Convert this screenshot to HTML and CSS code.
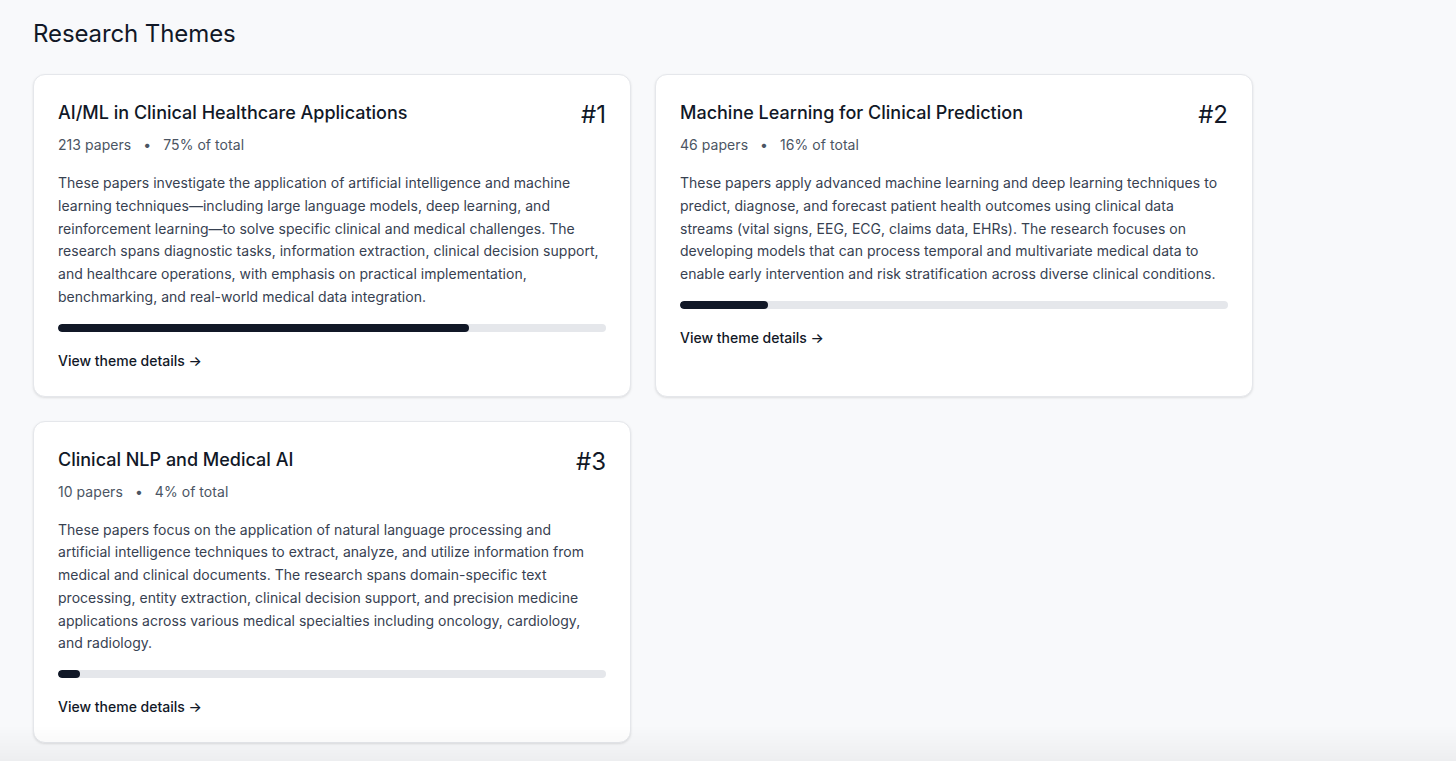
FILE: index.html
```html
<!DOCTYPE html>
<html lang="en">
<head>
<meta charset="utf-8">
<title>Research Themes</title>
<link rel="stylesheet" href="styles.css">
</head>
<body>
<main class="page">
  <h1 class="page-title">Research Themes</h1>
  <div class="grid">
    <article class="card">
      <div class="card-head">
        <h2 class="card-title">AI/ML in Clinical Healthcare Applications</h2>
        <span class="rank">#1</span>
      </div>
      <div class="meta"><span>213 papers</span><span class="dot">•</span><span>75% of total</span></div>
      <p class="desc">These papers investigate the application of artificial intelligence and machine learning techniques—including large language models, deep learning, and reinforcement learning—to solve specific clinical and medical challenges. The research spans diagnostic tasks, information extraction, clinical decision support, and healthcare operations, with emphasis on practical implementation, benchmarking, and real-world medical data integration.</p>
      <div class="bar"><div class="fill" style="width:75%"></div></div>
      <a class="link" href="#">View theme details →</a>
    </article>
    <article class="card">
      <div class="card-head">
        <h2 class="card-title">Machine Learning for Clinical Prediction</h2>
        <span class="rank">#2</span>
      </div>
      <div class="meta"><span>46 papers</span><span class="dot">•</span><span>16% of total</span></div>
      <p class="desc">These papers apply advanced machine learning and deep learning techniques to predict, diagnose, and forecast patient health outcomes using clinical data streams (vital signs, EEG, ECG, claims data, EHRs). The research focuses on developing models that can process temporal and multivariate medical data to enable early intervention and risk stratification across diverse clinical conditions.</p>
      <div class="bar"><div class="fill" style="width:16%"></div></div>
      <a class="link" href="#">View theme details →</a>
    </article>
    <article class="card">
      <div class="card-head">
        <h2 class="card-title">Clinical NLP and Medical AI</h2>
        <span class="rank">#3</span>
      </div>
      <div class="meta"><span>10 papers</span><span class="dot">•</span><span>4% of total</span></div>
      <p class="desc">These papers focus on the application of natural language processing and artificial intelligence techniques to extract, analyze, and utilize information from medical and clinical documents. The research spans domain-specific text processing, entity extraction, clinical decision support, and precision medicine applications across various medical specialties including oncology, cardiology, and radiology.</p>
      <div class="bar"><div class="fill" style="width:4%"></div></div>
      <a class="link" href="#">View theme details →</a>
    </article>
  </div>
</main>
<div class="bottom-fade"></div>
</body>
</html>
```
FILE: styles.css
```css
* { box-sizing: border-box; }
html, body { margin: 0; padding: 0; }
body {
  background: #f8f9fb;
  font-family: Inter, "Noto Sans", "Liberation Sans", sans-serif;
  color: #111827;
}
.page {
  padding: 18px 33px 24px;
}
.page-title {
  margin: 0 0 24px;
  font-size: 24px;
  line-height: 32px;
  font-weight: 400;
  color: #111827;
  letter-spacing: -0.1px;
}
.grid {
  display: grid;
  grid-template-columns: 598px 598px;
  gap: 24px;
}
.card {
  background: #fff;
  border: 1px solid #e5e7eb;
  border-radius: 12px;
  box-shadow: 0 1px 3px rgba(0,0,0,0.08), 0 1px 2px rgba(0,0,0,0.04);
  padding: 24px 24px 23px;
  display: flex;
  flex-direction: column;
  align-items: flex-start;
}
.card-head {
  display: flex;
  justify-content: space-between;
  align-items: flex-start;
  width: 100%;
}
.card-title {
  margin: 0;
  font-size: 18px;
  line-height: 28px;
  font-weight: 500;
  color: #111827;
}
.rank {
  font-size: 24px;
  line-height: 32px;
  font-weight: 400;
  color: #111827;
}
.meta {
  margin-top: 4px;
  display: flex;
  gap: 12px;
  font-size: 14px;
  line-height: 20px;
  color: #4b5563;
  letter-spacing: 0.05px;
}
.dot { color: #4b5563; }
.desc {
  margin: 17px 0 0;
  font-size: 14px;
  line-height: 22.75px;
  color: #374151;
  letter-spacing: 0.025px;
}
.bar {
  margin-top: 15px;
  width: 100%;
  height: 8px;
  border-radius: 9999px;
  background: #e5e7eb;
  overflow: hidden;
}
.fill {
  height: 100%;
  border-radius: 9999px;
  background: #111827;
}
.link {
  margin-top: 17px;
  font-size: 14px;
  line-height: 24px;
  font-weight: 500;
  color: #111827;
  text-decoration: none;
}
.bottom-fade {
  position: fixed;
  left: 0;
  right: 0;
  bottom: 0;
  height: 36px;
  pointer-events: none;
  background: linear-gradient(to bottom, rgba(0,0,0,0), rgba(0,0,0,0.045));
}
```
